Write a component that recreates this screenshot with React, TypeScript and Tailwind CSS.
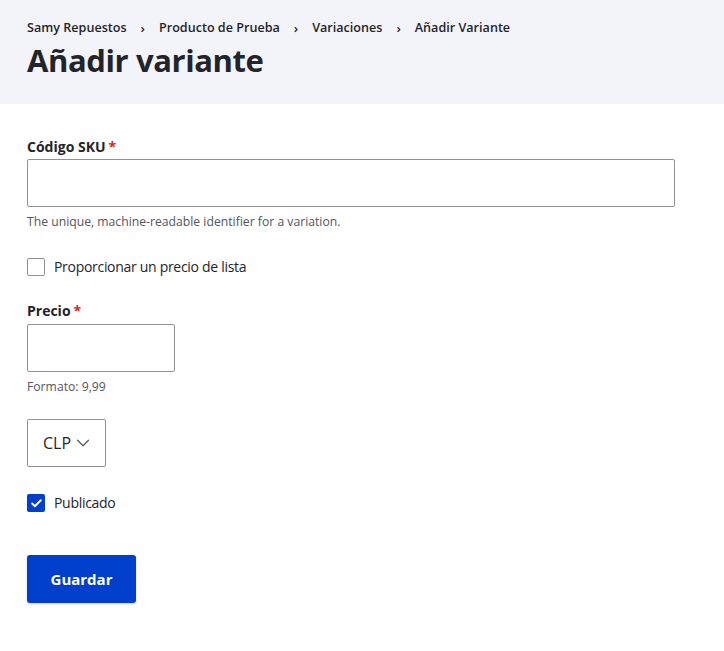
import { Check, ChevronDown } from 'lucide-react';

const crumbs = ['Samy Repuestos', 'Producto de Prueba', 'Variaciones', 'Añadir Variante'];

function Required() {
  return <span className="ml-[3px] text-[#dc2323]">*</span>;
}

export default function App() {
  return (
    <div className="min-h-[651px] bg-white text-[#232429] font-['Open_Sans',sans-serif]">
      <header className="h-[104px] bg-[#f3f4f9] px-[27px] pt-[18px]">
        <nav className="flex items-center text-[12.6px] font-semibold leading-[20px]">
          {crumbs.map((c, i) => (
            <span key={c} className="flex items-center">
              {i > 0 && <span className="mx-[14px] text-[13px]">›</span>}
              {c}
            </span>
          ))}
        </nav>
        <h1 className="mt-[2px] text-[31px] font-bold leading-[40px] tracking-[-0.4px]">
          Añadir variante
        </h1>
      </header>

      <form className="px-[27px] pt-[33px]">
        <div>
          <label className="flex items-center text-[14px] font-bold leading-[20px]">
            Código SKU
            <Required />
          </label>
          <div className="mt-[2px] h-[48px] w-[648px] rounded-[2px] border border-[#919297]" />
          <p className="mt-[6px] text-[12.2px] leading-[18px] text-[#545560]">
            The unique, machine-readable identifier for a variation.
          </p>
        </div>

        <label className="mt-[26px] flex items-center gap-[9px] text-[14px] leading-[20px] tracking-[-0.3px]">
          <span className="h-[18px] w-[18px] rounded-[2px] border border-[#919297]" />
          Proporcionar un precio de lista
        </label>

        <div className="mt-[24px]">
          <label className="flex items-center text-[14px] font-bold leading-[20px]">
            Precio
            <Required />
          </label>
          <div className="mt-[3px] h-[48px] w-[148px] rounded-[2px] border border-[#919297]" />
          <p className="mt-[6px] text-[12.2px] leading-[18px] text-[#545560]">Formato: 9,99</p>
        </div>

        <div className="mt-[23px] flex h-[48px] w-[79px] items-center rounded-[2px] border border-[#919297] pl-[15px] text-[16px]">
          CLP
          <ChevronDown className="ml-[1px] h-[22px] w-[22px] text-[#545560]" strokeWidth={1.3} />
        </div>

        <label className="mt-[26px] flex items-center gap-[9px] text-[14px] leading-[20px] tracking-[-0.3px]">
          <span className="flex h-[18px] w-[18px] items-center justify-center rounded-[2px] bg-[#003ecc]">
            <Check className="h-[13px] w-[13px] text-white" strokeWidth={3.5} />
          </span>
          Publicado
        </label>

        <button
          type="button"
          className="mt-[42px] h-[48px] w-[109px] rounded-[3px] bg-[#003ecc] text-[15px] font-bold text-white shadow-[0_1px_2px_rgba(0,0,0,0.2)]"
        >
          Guardar
        </button>
      </form>
    </div>
  );
}
